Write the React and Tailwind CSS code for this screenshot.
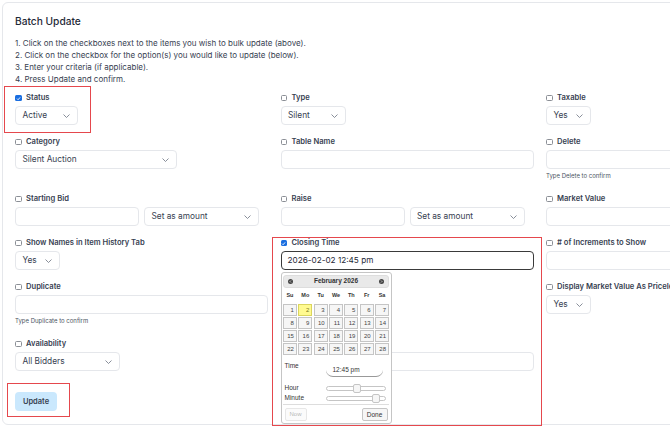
import React from 'react';

function Check({ checked }) {
  return checked ? (
    <span className="w-[6.5px] h-[6.5px] rounded-[1.5px] bg-[#1a6ee0] flex items-center justify-center shrink-0">
      <svg width="5" height="5" viewBox="0 0 10 10">
        <path d="M2 5.2L4.2 7.4L8.2 2.8" stroke="white" strokeWidth="1.8" fill="none" />
      </svg>
    </span>
  ) : (
    <span className="w-[6.5px] h-[6.5px] rounded-[1.5px] border-[0.75px] border-[#8b8f96] bg-white shrink-0" />
  );
}

function Label({ checked, children }) {
  return (
    <div className="flex items-center gap-[4.5px] h-[10px] mb-[3px]">
      <Check checked={checked} />
      <span className="text-[7.6px] font-semibold text-[#374151] leading-[10px] whitespace-nowrap">{children}</span>
    </div>
  );
}

function Chevron() {
  return (
    <svg width="7" height="4" viewBox="0 0 7 4" fill="none" className="shrink-0">
      <path d="M0.5 0.5L3.5 3.5L6.5 0.5" stroke="#6b7280" strokeWidth="0.8" />
    </svg>
  );
}

function Select({ className, value }) {
  return (
    <div className={`${className} h-[19px] flex items-center justify-between pl-[6.5px] pr-[7px] border border-[#e5e7eb] rounded-[4px] bg-white text-[8.3px] text-[#374151] whitespace-nowrap`}>
      <span>{value}</span>
      <Chevron />
    </div>
  );
}

function Input({ className }) {
  return <div className={`${className} h-[19px] border border-[#e5e7eb] rounded-[4px] bg-white`} />;
}

function Helper({ children }) {
  return <div className="h-[13px] pt-[2.5px] text-[6px] leading-[8px] text-[#4b5563] whitespace-nowrap">{children}</div>;
}

const days = Array.from({ length: 28 }, (_, i) => i + 1);

function Slider({ left }) {
  return (
    <div className="relative w-[60px] h-[5px] border border-[#c5c5c5] rounded-[3px] bg-white">
      <div className="absolute top-[-3px] w-[8px] h-[9px] bg-[#f6f6f6] border border-[#c5c5c5] rounded-[2px]" style={{ left }} />
    </div>
  );
}

function DatePicker() {
  return (
    <div className="absolute left-0 top-[34px] z-10 w-[111px] h-[152px] bg-white border border-[#c5c5c5] rounded-[3px] p-[1.5px] font-['Liberation_Sans',Arial,sans-serif] text-[#333333]">
      <div className="h-[13px] bg-[#e9e9e9] border border-[#dddddd] rounded-[3px] flex items-center justify-between px-[4px]">
        <span className="w-[5px] h-[5px] rounded-full bg-[#444] flex items-center justify-center">
          <svg width="3" height="3" viewBox="0 0 6 6"><path d="M4 1L2 3L4 5" stroke="white" strokeWidth="1.4" fill="none" /></svg>
        </span>
        <span className="text-[6.5px] font-bold">February 2026</span>
        <span className="w-[5px] h-[5px] rounded-full bg-[#444] flex items-center justify-center">
          <svg width="3" height="3" viewBox="0 0 6 6"><path d="M2 1L4 3L2 5" stroke="white" strokeWidth="1.4" fill="none" /></svg>
        </span>
      </div>
      <div className="grid grid-cols-7 gap-x-[1.4px] h-[16px] items-center text-[5.5px] font-bold text-center">
        {['Su', 'Mo', 'Tu', 'We', 'Th', 'Fr', 'Sa'].map((d) => (
          <span key={d}>{d}</span>
        ))}
      </div>
      <div className="grid grid-cols-7 gap-x-[1.4px] gap-y-[1.3px]">
        {days.map((d) => (
          <div
            key={d}
            className={
              d === 2
                ? 'h-[12px] border border-[#dad55e] bg-[#fffa90] text-[#777620] text-right pr-[2px] text-[6px] leading-[10px]'
                : 'h-[12px] border border-[#c5c5c5] bg-[#f6f6f6] text-[#454545] text-right pr-[2px] text-[6px] leading-[10px]'
            }
          >
            {d}
          </div>
        ))}
      </div>
      <div className="pl-[1.5px] mt-[4px]">
        <div className="flex h-[24px]">
          <div className="w-[41px] pt-[3px] text-[6.5px] leading-[8px]">Time</div>
          <div className="w-[57px] h-[18px] border-b border-[#999999] rounded-b-[7px] pl-[7px] pt-[7px] text-[6.5px] leading-[8px]">12:45 pm</div>
        </div>
        <div className="flex items-center h-[10px]">
          <div className="w-[41px] text-[6.5px] leading-[8px]">Hour</div>
          <Slider left={26} />
        </div>
        <div className="flex items-center h-[10px]">
          <div className="w-[41px] text-[6.5px] leading-[8px]">Minute</div>
          <Slider left={45} />
        </div>
      </div>
      <div className="border-t border-[#dddddd] mt-[1px] pt-[3px] px-[1.5px] flex justify-between">
        <div className="w-[22px] h-[13px] border border-[#c5c5c5] bg-[#f6f6f6] rounded-[2px] text-[6px] text-[#454545] opacity-40 flex items-center justify-center">Now</div>
        <div className="w-[26px] h-[13px] border border-[#c5c5c5] bg-[#f6f6f6] rounded-[2px] text-[6.5px] text-[#333] flex items-center justify-center">Done</div>
      </div>
    </div>
  );
}

export default function App() {
  return (
    <div className="relative w-[670px] h-[426px] overflow-hidden bg-white font-['Inter',sans-serif]">
      <div className="ml-[2px] mt-[2px] w-[820px] h-[423px] border border-[#e5e7eb] rounded-[6px] pl-[12px] pt-[11px]">
        <h1 className="text-[10.2px] leading-[14px] font-medium text-[#1f2937]">Batch Update</h1>
        <div className="mt-[8.6px] text-[8px] leading-[12.2px] text-[#374151]">
          <p>1. Click on the checkboxes next to the items you wish to bulk update (above).</p>
          <p>2. Click on the checkbox for the option(s) you would like to update (below).</p>
          <p>3. Enter your criteria (if applicable).</p>
          <p>4. Press Update and confirm.</p>
        </div>
        <div className="mt-[7.6px] grid grid-cols-[253px_253px_253px] gap-x-[12.5px] gap-y-[12px] items-start">
          {/* Row 1 */}
          <div>
            <Label checked>Status</Label>
            <Select className="w-[63px]" value="Active" />
          </div>
          <div>
            <Label>Type</Label>
            <Select className="w-[65px]" value="Silent" />
          </div>
          <div>
            <Label>Taxable</Label>
            <Select className="w-[45px]" value="Yes" />
          </div>
          {/* Row 2 */}
          <div>
            <Label>Category</Label>
            <Select className="w-[162px]" value="Silent Auction" />
          </div>
          <div>
            <Label>Table Name</Label>
            <Input className="w-full" />
          </div>
          <div>
            <Label>Delete</Label>
            <Input className="w-full" />
            <Helper>Type Delete to confirm</Helper>
          </div>
          {/* Row 3 */}
          <div>
            <Label>Starting Bid</Label>
            <div className="flex gap-[5px]">
              <Input className="w-[124px]" />
              <Select className="w-[115px]" value="Set as amount" />
            </div>
          </div>
          <div>
            <Label>Raise</Label>
            <div className="flex gap-[5px]">
              <Input className="w-[124px]" />
              <Select className="w-[115px]" value="Set as amount" />
            </div>
          </div>
          <div>
            <Label>Market Value</Label>
            <Input className="w-full" />
          </div>
          {/* Row 4 */}
          <div>
            <Label>Show Names in Item History Tab</Label>
            <Select className="w-[45px]" value="Yes" />
          </div>
          <div className="relative">
            <Label checked>Closing Time</Label>
            <div className="w-full h-[19px] border-[1.3px] border-[#3a3a3a] rounded-[4px] bg-white flex items-center pl-[6px] text-[8.2px] text-[#1f2937]">
              2026-02-02 12:45 pm
            </div>
            <DatePicker />
          </div>
          <div>
            <Label># of Increments to Show</Label>
            <Input className="w-full" />
          </div>
          {/* Row 5 */}
          <div>
            <Label>Duplicate</Label>
            <Input className="w-full" />
            <Helper>Type Duplicate to confirm</Helper>
          </div>
          <div />
          <div>
            <Label>Display Market Value As Priceless</Label>
            <Select className="w-[45px]" value="Yes" />
          </div>
          {/* Row 6 */}
          <div>
            <Label>Availability</Label>
            <Select className="w-[105px]" value="All Bidders" />
          </div>
          <div>
            <div className="h-[10px] mb-[3px]" />
            <Input className="w-full" />
          </div>
          <div />
        </div>
        <button className="mt-[21px] w-[42px] h-[19px] rounded-[4px] bg-[#cae8fd] text-[7.5px] font-semibold text-[#374151] flex items-center justify-center">
          Update
        </button>
      </div>
      {/* annotation boxes */}
      <div className="absolute left-[4px] top-[86px] w-[87px] h-[47px] border-[1.5px] border-[#e5484d]" />
      <div className="absolute left-[272px] top-[237px] w-[270px] h-[189px] border-[1.5px] border-[#e5484d]" />
      <div className="absolute left-[7px] top-[383px] w-[63px] h-[34px] border-[1.5px] border-[#e5484d]" />
    </div>
  );
}
